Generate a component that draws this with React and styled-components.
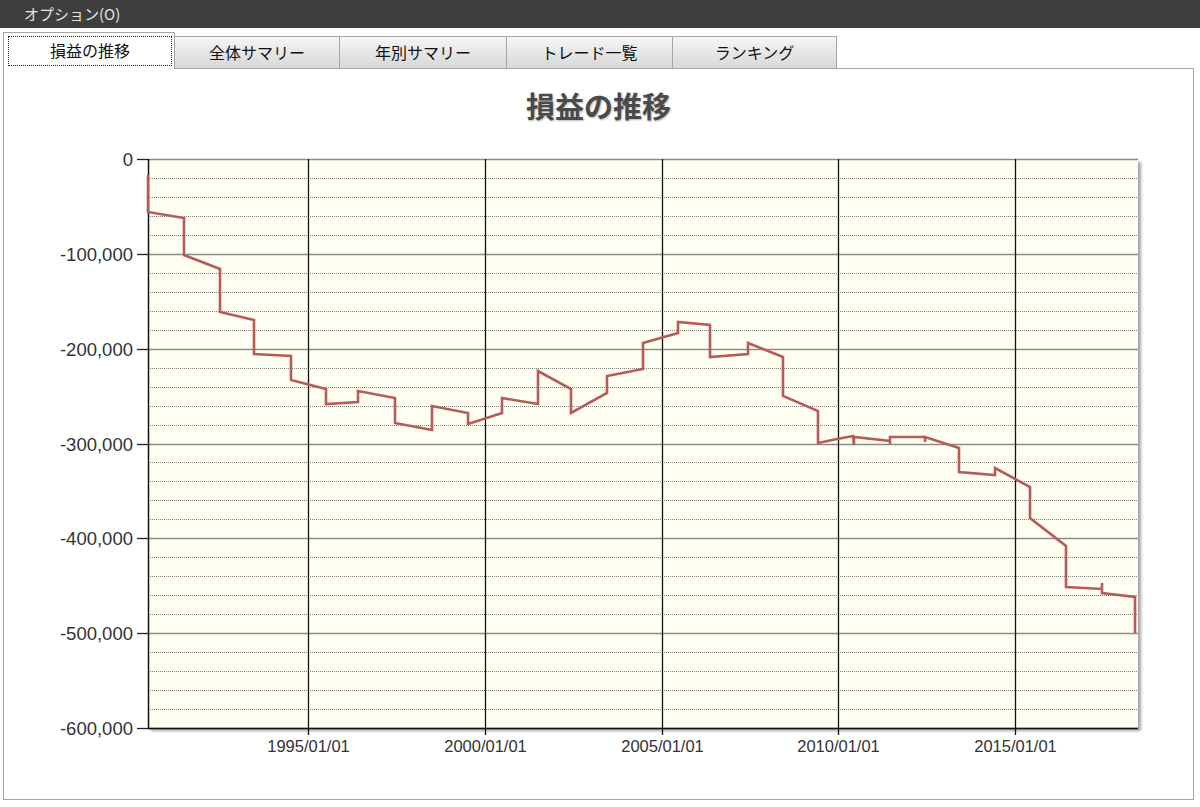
import React from "react";
import styled, { createGlobalStyle } from "styled-components";

const GlobalStyle = createGlobalStyle`
  html, body {
    margin: 0;
    padding: 0;
    background: #ffffff;
  }
  body {
    font-family: "Noto Sans CJK JP", "Liberation Sans", sans-serif;
    color: #111;
  }
`;

const Window = styled.div`
  width: 1200px;
  height: 807px;
  background: #ffffff;
  overflow: hidden;
`;

const MenuBar = styled.div`
  height: 28px;
  background: #3e3e3e;
  color: #e4e4e4;
  font-size: 15px;
  line-height: 28px;
  padding-left: 24px;
  box-sizing: border-box;
`;

const TabStrip = styled.div`
  display: flex;
  align-items: flex-end;
  height: 40px;
  padding-left: 3px;
  position: relative;
  z-index: 1;
`;

const Tab = styled.button`
  all: unset;
  box-sizing: border-box;
  display: flex;
  width: ${(p) => p.$w}px;
  height: ${(p) => (p.$active ? 37 : 32)}px;
  margin-left: ${(p) => (p.$first ? 0 : -1)}px;
  margin-bottom: ${(p) => (p.$active ? -1 : 0)}px;
  padding: ${(p) => (p.$active ? "3px 2px 3px 4px" : "0")};
  border: 1px solid #a4a4a4;
  border-bottom: none;
  background: ${(p) =>
    p.$active ? "#ffffff" : "linear-gradient(#f6f6f6, #e8e8e8 45%, #d8d8d8)"};
  font-size: 16px;
  color: #111;
  cursor: default;
`;

const TabLabel = styled.span`
  flex: 1;
  display: flex;
  align-items: center;
  justify-content: center;
  border: 1px ${(p) => (p.$focus ? "dotted #222" : "solid transparent")};
  padding-bottom: 2px;
`;

const Panel = styled.section`
  box-sizing: border-box;
  height: 732px;
  margin: 0 6px 0 3px;
  border: 1px solid #a4a4a4;
  display: flex;
  flex-direction: column;
`;

const ChartTitle = styled.h1`
  margin: 0;
  height: 71px;
  padding-top: 2px;
  box-sizing: border-box;
  line-height: 69px;
  text-align: center;
  font-family: "Noto Sans CJK JP", sans-serif;
  font-weight: 700;
  font-size: 29px;
  color: #4a4a4a;
  text-shadow: 1px 1px 2px rgba(0, 0, 0, 0.28);
`;

const ChartSvg = styled.svg`
  display: block;
  width: 1188px;
  height: 658px;
  font-family: "Liberation Sans", Arial, sans-serif;
`;

const tabs = [
  { label: "損益の推移", w: 172 },
  { label: "全体サマリー", w: 166 },
  { label: "年別サマリー", w: 168 },
  { label: "トレード一覧", w: 167 },
  { label: "ランキング", w: 165 },
];

// plot area in page pixels
const PL = 148;
const PT = 159;
const PR = 1138;
const PB = 728;
const yPx = (v) => PT + (-v / 600000) * (PB - PT);
const xYear = (y) => 308 + (y - 1995) * 35.35;

// cumulative profit curve, stepped per trade
const curve = [
  [148, 175], [148, 212], [184, 218], [184, 255], [220, 269], [220, 312],
  [254, 320], [254, 354], [291, 356], [291, 380], [326, 389], [326, 404],
  [358, 402], [358, 391], [395, 398], [395, 423], [432, 430], [432, 406],
  [468, 413], [468, 424], [502, 413], [502, 398], [538, 404], [538, 371],
  [571, 389], [571, 413], [607, 393], [607, 376], [643, 369], [643, 343],
  [678, 333], [678, 322], [710, 325], [710, 357], [748, 354], [748, 343],
  [783, 357], [783, 396], [818, 411], [818, 443], [837, 439], [853, 436],
  [854, 445], [854, 437], [890, 441], [890, 444], [890, 437], [925, 437],
  [925, 442], [925, 437], [959, 448], [959, 472], [995, 475], [995, 468],
  [1030, 487], [1030, 518], [1066, 546], [1066, 587], [1102, 589],
  [1102, 583], [1102, 593], [1135, 597], [1135, 633],
];

const majors = [0, -100000, -200000, -300000, -400000, -500000, -600000];
const minors = [];
for (let v = 0; v > -600000; v -= 20000) {
  if (v % 100000 !== 0) minors.push(v);
}
const years = [1995, 2000, 2005, 2010, 2015];
const fmt = (v) => (v === 0 ? "0" : "-" + Math.abs(v).toLocaleString("en-US"));

function ProfitChart() {
  return (
    <ChartSvg viewBox="4 140 1188 658">
      <defs>
        <filter id="plotShadow" x="-2%" y="-2%" width="106%" height="106%">
          <feDropShadow dx="3" dy="3" stdDeviation="1.6" floodColor="#000" floodOpacity="0.35" />
        </filter>
      </defs>
      <rect x={PL} y={PT} width={PR - PL} height={PB - PT} fill="#fffff1" filter="url(#plotShadow)" />

      {minors.map((v) => (
        <line
          key={v}
          x1={PL}
          x2={PR}
          y1={Math.round(yPx(v)) + 0.5}
          y2={Math.round(yPx(v)) + 0.5}
          stroke="#7e7e7e"
          strokeDasharray="1 1"
          strokeWidth="1"
        />
      ))}
      {majors.map((v) => {
        const y = Math.round(yPx(v)) + 0.5;
        return (
          <g key={v}>
            <line x1={PL} x2={PR} y1={y} y2={y} stroke="#8a8a8a" strokeWidth="1.3" />
            <line x1={PL - 11} x2={PL} y1={y} y2={y} stroke="#222" strokeWidth="1.3" />
            <text x={PL - 15} y={y + 6.5} textAnchor="end" fontSize="18.5" fill="#333">
              {fmt(v)}
            </text>
          </g>
        );
      })}
      {years.map((yr) => {
        const x = Math.round(xYear(yr)) + 0.5;
        return (
          <g key={yr}>
            <line x1={x} x2={x} y1={PT} y2={PB + 7} stroke="#111" strokeWidth="1.3" />
            <text x={x} y={PB + 24} textAnchor="middle" fontSize="16.5" fill="#333">
              {yr}/01/01
            </text>
          </g>
        );
      })}
      <line x1={PL + 0.5} x2={PL + 0.5} y1={PT} y2={PB} stroke="#111" strokeWidth="1.5" />
      <line x1={PL} x2={PR} y1={PB + 0.5} y2={PB + 0.5} stroke="#111" strokeWidth="1.5" />

      <polyline
        points={curve.map((p) => p.join(",")).join(" ")}
        fill="none"
        stroke="#b75b59"
        strokeWidth="2.6"
        strokeLinejoin="miter"
      />
    </ChartSvg>
  );
}

export default function App() {
  return (
    <Window>
      <GlobalStyle />
      <MenuBar>オプション(O)</MenuBar>
      <TabStrip>
        {tabs.map((t, i) => (
          <Tab key={t.label} $w={t.w} $active={i === 0} $first={i === 0}>
            <TabLabel $focus={i === 0}>{t.label}</TabLabel>
          </Tab>
        ))}
      </TabStrip>
      <Panel>
        <ChartTitle>損益の推移</ChartTitle>
        <ProfitChart />
      </Panel>
    </Window>
  );
}
